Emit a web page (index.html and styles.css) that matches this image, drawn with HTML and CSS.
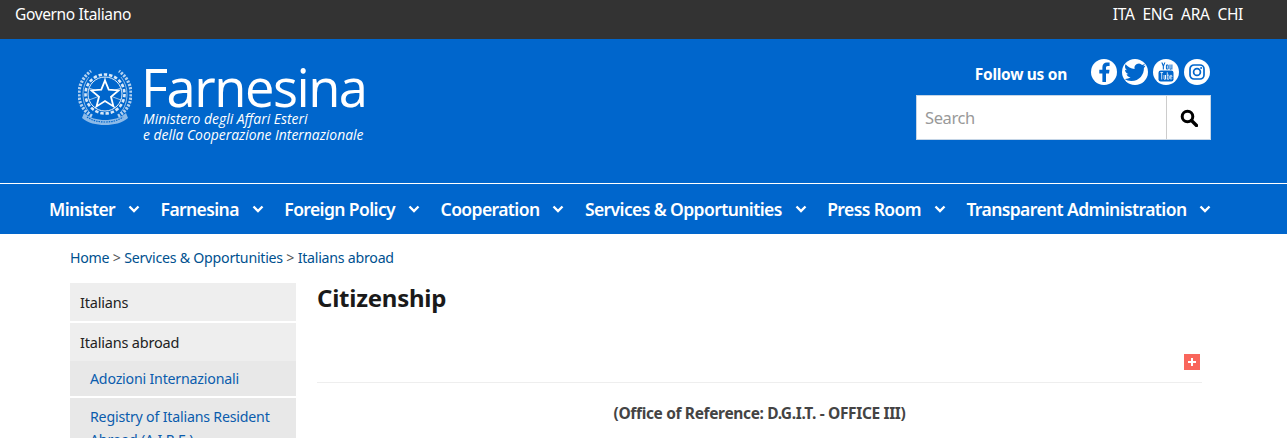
FILE: index.html
```html
<!DOCTYPE html>
<html lang="en">
<head>
<meta charset="utf-8">
<title>Citizenship</title>
<link rel="stylesheet" href="styles.css">
</head>
<body>
<div class="topbar">
  <a class="gov" href="#">Governo Italiano</a>
  <div class="langs"><a href="#">ITA</a><a href="#">ENG</a><a href="#">ARA</a><a href="#">CHI</a></div>
</div>
<header class="masthead">
  <a class="logo" href="#">
    <svg class="emblem" viewBox="0 0 54 60" width="54" height="60" fill="none" stroke="#fff">
      <path d="M14 50C5 45 1 37 1 28 1 19 5 11 13 5" stroke-width="3.200" stroke-dasharray="2.200 1.300" opacity=".7"/>
      <path d="M40 50c9-5 13-13 13-22 0-9-4-17-12-23" stroke-width="3.200" stroke-dasharray="2.200 1.300" opacity=".7"/>
      <path d="M12 47C7 42 5 35 5 28c0-6 2-12 6-17M42 47c5-5 7-12 7-19 0-6-2-12-6-17" stroke-width=".7" opacity=".8"/>
      <circle cx="27" cy="28" r="19.500" stroke-width="2.600" stroke-dasharray="3.400 1.900" opacity=".85"/>
      <circle cx="27" cy="28" r="17" stroke-width=".9"/>
      <path d="M27 28V11M27 28l16 6M27 28l10 14M27 28l-10 14M27 28l-16 6M27 28l16-6M27 28l-16-6" stroke-width=".8" opacity=".75"/>
      <path d="M27 14.500l3.700 9.200 9.900.7-7.600 6.400 2.400 9.600-8.400-5.300-8.400 5.300 2.400-9.600-7.600-6.400 9.900-.7z" fill="#0066cc" stroke="#fff" stroke-width="1.800"/>
      <path d="M6 47c6 5 13 7 21 7s15-2 21-7l2 5c-6 5-14 7-23 7S10 57 4 52z" fill="#fff" fill-opacity=".55" stroke="none"/>
      <path d="M9 51c5 3.500 11 5 18 5s13-1.500 18-5" stroke="#0066cc" stroke-width="1.200" stroke-dasharray="1.500 1"/>
    </svg>
    <span class="logo-text">
      <span class="logo-name">Farnesina</span>
      <span class="logo-sub">Ministero degli Affari Esteri</span>
      <span class="logo-sub">e della Cooperazione Internazionale</span>
    </span>
  </a>
  <div class="tools">
    <div class="follow">
      <span class="follow-label">Follow us on</span>
      <div class="socials">
        <a class="social" href="#" aria-label="Facebook"><svg viewBox="0 0 26 26" width="26" height="26"><circle cx="13" cy="13" r="13" fill="#fff"/><path d="M15 23v-8.600h3l.5-3.700H15V8.700c0-1.100.4-1.800 1.800-1.800h1.800V3.600c-.4 0-1.500-.2-2.700-.2-2.700 0-4.500 1.600-4.500 4.700v2.600H8.300v3.700h3.100V23z" fill="#0066cc"/></svg></a>
        <a class="social" href="#" aria-label="Twitter"><svg viewBox="0 0 26 26" width="26" height="26"><circle cx="13" cy="13" r="13" fill="#fff"/><path d="M23.500 6.500c-.8.300-1.600.6-2.500.7.900-.5 1.600-1.400 1.900-2.400-.8.500-1.800.9-2.800 1.100a4.400 4.400 0 0 0-7.500 4c-3.600-.2-6.900-1.900-9-4.600-1.200 2-.6 4.600 1.400 5.900-.7 0-1.400-.2-2-.5 0 2.100 1.500 4 3.500 4.400-.6.200-1.300.2-2 .1.600 1.800 2.200 3 4.100 3A8.800 8.800 0 0 1 2.500 20a12.400 12.400 0 0 0 6.800 2c8.200 0 12.900-6.900 12.600-13.100.7-.6 1.300-1.500 1.600-2.400z" fill="#0066cc"/></svg></a>
        <a class="social" href="#" aria-label="YouTube"><svg viewBox="0 0 26 26" width="26" height="26"><circle cx="13" cy="13" r="13" fill="#fff"/><path d="M8.300 3.500l1.500 3.700v3.300h1.100V7.200l1.500-3.700h-1.100l-.9 2.300-.9-2.300zM14.300 5.500c-.9 0-1.400.5-1.400 1.300v2.400c0 .8.500 1.400 1.400 1.400s1.400-.6 1.400-1.400V6.800c0-.8-.5-1.300-1.400-1.300zm0 .9c.2 0 .4.200.4.400v2.500c0 .2-.2.400-.4.400s-.4-.2-.4-.4V6.800c0-.2.200-.4.400-.4zM16.500 5.500v4.200c0 .6.300 1 .9 1 .4 0 .7-.2 1-.6v.5h1V5.500h-1v4c-.1.200-.3.300-.4.300-.2 0-.5-.1-.5-.3v-4z" fill="#0066cc"/><rect x="5.500" y="11.500" width="15" height="11" rx="2.200" fill="#0066cc"/><path d="M7.300 13.500h2.800M8.700 13.500v7M11 16v3.700c0 .8 1 .8 1.500 0V16M12.500 16v4.500M14.300 13.300v7.200M14.300 16.700c.8-1 1.800-.7 1.800.3v2.400c0 1-1 1.300-1.800.3M17.300 18h1.600v-1c0-1.100-1.700-1.100-1.700 0v2.400c0 1.100 1.700 1.100 1.700 0" fill="none" stroke="#fff" stroke-width=".8"/></svg></a>
        <a class="social" href="#" aria-label="Instagram"><svg viewBox="0 0 26 26" width="26" height="26"><circle cx="13" cy="13" r="13" fill="#fff"/><rect x="6" y="6" width="14" height="14" rx="4" fill="none" stroke="#0066cc" stroke-width="1.700"/><circle cx="13" cy="13" r="3.400" fill="none" stroke="#0066cc" stroke-width="1.700"/><circle cx="17.100" cy="8.900" r="1" fill="#0066cc"/></svg></a>
      </div>
    </div>
    <form class="search">
      <input class="search-input" type="text" placeholder="Search">
      <button class="search-btn" type="button" aria-label="Search"><svg viewBox="0 0 18 18" width="18" height="18"><circle cx="7.500" cy="7.500" r="5.300" fill="none" stroke="#000" stroke-width="3"/><path d="M11.500 11.500l5 5" stroke="#000" stroke-width="3.400" stroke-linecap="round"/></svg></button>
    </form>
  </div>
</header>
<nav class="mainnav">
  <a class="navitem" href="#">Minister<svg class="chev" viewBox="0 0 12 8" width="12" height="8"><path d="M1.500 1.500L6 6l4.500-4.500"/></svg></a>
  <a class="navitem" href="#">Farnesina<svg class="chev" viewBox="0 0 12 8" width="12" height="8"><path d="M1.500 1.500L6 6l4.500-4.500"/></svg></a>
  <a class="navitem" href="#">Foreign Policy<svg class="chev" viewBox="0 0 12 8" width="12" height="8"><path d="M1.500 1.500L6 6l4.500-4.500"/></svg></a>
  <a class="navitem" href="#">Cooperation<svg class="chev" viewBox="0 0 12 8" width="12" height="8"><path d="M1.500 1.500L6 6l4.500-4.500"/></svg></a>
  <a class="navitem" href="#">Services &amp; Opportunities<svg class="chev" viewBox="0 0 12 8" width="12" height="8"><path d="M1.500 1.500L6 6l4.500-4.500"/></svg></a>
  <a class="navitem" href="#">Press Room<svg class="chev" viewBox="0 0 12 8" width="12" height="8"><path d="M1.500 1.500L6 6l4.500-4.500"/></svg></a>
  <a class="navitem" href="#">Transparent Administration<svg class="chev" viewBox="0 0 12 8" width="12" height="8"><path d="M1.500 1.500L6 6l4.500-4.500"/></svg></a>
</nav>
<div class="content">
  <div class="crumbs"><a href="#">Home</a> &gt; <a href="#">Services &amp; Opportunities</a> &gt; <a href="#">Italians abroad</a></div>
  <div class="columns">
    <aside class="side">
      <a class="side-top" href="#">Italians</a>
      <div class="side-group">
        <a class="side-top" href="#">Italians abroad</a>
        <a class="side-sub" href="#">Adozioni Internazionali</a>
      </div>
      <a class="side-sub" href="#">Registry of Italians Resident Abroad (A.I.R.E.)</a>
    </aside>
    <main class="main">
      <h1 class="title">Citizenship</h1>
      <div class="expand-row"><span class="expand"></span></div>
      <p class="lead">(Office of Reference: D.G.I.T. - OFFICE III)</p>
    </main>
  </div>
</div>
</body>
</html>
```
FILE: styles.css
```css
* { box-sizing: border-box; }
html, body { margin: 0; height: 438px; overflow: hidden; }
body { font-family: "Noto Sans", "Open Sans", sans-serif; background: #fff; color: #222; }
a { text-decoration: none; color: inherit; }

.topbar {
  height: 39px;
  background: #333;
  color: #fff;
  display: flex;
  justify-content: space-between;
  align-items: center;
  padding: 0 44px 11px 15px;
  font-size: 15.500px;
  letter-spacing: -.35px;
}
.langs { display: flex; gap: 8px; }

.masthead {
  height: 144px;
  background: #0066cc;
  color: #fff;
  display: flex;
  justify-content: space-between;
  padding: 20px 76px 0 78px;
}
.logo { display: flex; gap: 11px; align-items: flex-start; height: 82px; margin-top: 2px; }
.emblem { flex: none; margin-top: 5px; }
.logo-text { display: flex; flex-direction: column; }
.logo-name {
  font-family: "Open Sans", sans-serif;
  font-weight: 400;
  font-size: 52.500px;
  line-height: 49px;
  letter-spacing: -1.500px;
  margin-left: -2px;
  padding-top: 1px;
}
.logo-sub {
  font-family: "Open Sans", sans-serif;
  font-style: italic;
  font-size: 13.900px;
  line-height: 16px;
  white-space: nowrap;
}

.tools { display: flex; flex-direction: column; align-items: flex-end; }
.follow { display: flex; align-items: flex-start; height: 36px; margin-right: 1px; }
.follow-label { font-weight: 700; font-size: 15.500px; line-height: 22px; letter-spacing: -.3px; margin-right: 24px; padding-top: 4px; }
.socials { display: flex; gap: 5px; }
.social { display: block; width: 26px; height: 26px; }
.social svg { display: block; }

.search { display: flex; width: 295px; height: 45px; background: #fff; border: 1px solid #c5d5e6; }
.search-input {
  flex: 1;
  min-width: 0;
  border: 0;
  outline: 0;
  padding: 0 8px;
  font: 16.500px "Noto Sans", sans-serif;
  letter-spacing: -.4px;
  color: #555;
}
.search-input::placeholder { color: #999; opacity: 1; }
.search-btn {
  width: 44px;
  border: 0;
  border-left: 1px solid #ccc;
  background: #fff;
  padding: 0;
  display: flex;
  align-items: center;
  justify-content: center;
}

.mainnav {
  height: 51px;
  background: #0066cc;
  border-top: 1px solid #fff;
  color: #fff;
  display: flex;
  align-items: center;
  padding: 0 0 0 49px;
  gap: 20.500px;
  font-weight: 600;
  font-size: 17.500px;
  letter-spacing: -.6px;
}
.navitem { display: flex; align-items: center; gap: 13px; white-space: nowrap; }
.chev { fill: none; stroke: #fff; stroke-width: 2.400; }

.content { padding: 0 85px 0 70px; }
.crumbs { height: 49px; padding-top: 14px; font-size: 14.200px; line-height: 20px; letter-spacing: -.25px; color: #555; }
.crumbs a { color: #00518f; }

.columns { display: grid; grid-template-columns: 226px 1fr; gap: 21px; }
.side { display: flex; flex-direction: column; gap: 2px; font-size: 14.500px; letter-spacing: -.2px; }
.side-group { display: flex; flex-direction: column; }
.side-top { display: block; background: #eee; height: 38px; line-height: 38px; padding: 0 10px; color: #222; }
.side-sub { display: block; background: #e8e8e8; padding: 7px 20px; line-height: 23px; color: #0b5cad; font-size: 14.200px; }
.side-group .side-sub { height: 35px; padding-top: 6px; padding-bottom: 0; }

.title { margin: 0; font-size: 24px; line-height: 30px; font-weight: 700; color: #1a1a1a; letter-spacing: -.25px; }
.expand-row { height: 70px; padding: 41px 2px 0 0; border-bottom: 1px solid #eee; display: flex; justify-content: flex-end; align-items: flex-start; }
.expand { position: relative; width: 16px; height: 16px; background: #f9665c; }
.expand::before, .expand::after { content: ""; position: absolute; background: #fff; }
.expand::before { left: 4px; top: 7px; width: 8px; height: 2px; }
.expand::after { left: 7px; top: 4px; width: 2px; height: 8px; }
.lead { margin: 19px 0 0; text-align: center; font-weight: 700; font-size: 15.500px; line-height: 22px; color: #444; letter-spacing: -.35px; }
```
